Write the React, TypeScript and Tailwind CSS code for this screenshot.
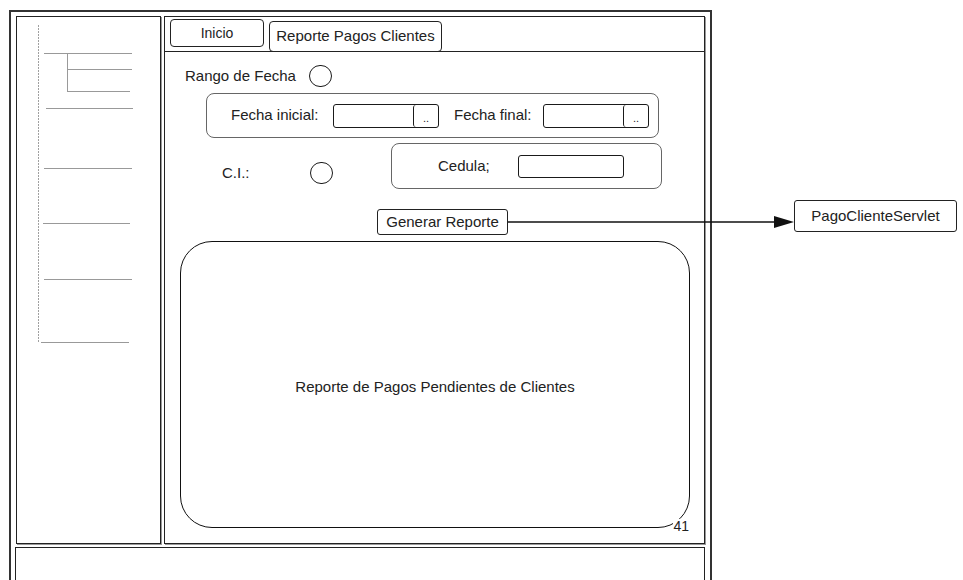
import React from 'react'

// wireframe of the "Reporte Pagos Clientes" screen

function TreeLines() {
  // coordinates are relative to the sidebar content box (page x/y minus 17)
  const rows: [number, number, number][] = [
    [36, 27, 115],
    [52, 50, 115],
    [74, 50, 113],
    [91, 29, 116],
    [151, 27, 115],
    [206, 26, 113],
    [262, 27, 115],
    [325, 24, 112],
  ]
  return (
    <svg width="143" height="340" className="block">
      <line x1="21.5" y1="8" x2="21.5" y2="325" stroke="#a0a0a0" strokeWidth="1" strokeDasharray="2 1" />
      <line x1="50.5" y1="36" x2="50.5" y2="74" stroke="#9a9a9a" strokeWidth="1" />
      {rows.map(([y, x1, x2], i) => (
        <line key={i} x1={x1} y1={y + 0.5} x2={x2} y2={y + 0.5} stroke="#999" strokeWidth="1" />
      ))}
    </svg>
  )
}

function DateInput() {
  return (
    <div className="flex h-[24px] w-[106px] shrink-0 rounded-[3px] border border-[#1a1a1a] bg-white">
      <div className="flex-1" />
      <div className="flex w-[25px] items-end justify-center rounded-[3px] border-l border-[#1a1a1a] pb-[3px] text-[11px] leading-none">
        ..
      </div>
    </div>
  )
}

function Circle({ className = '' }: { className?: string }) {
  return <div className={`h-[22px] w-[23px] shrink-0 rounded-full border border-[#1a1a1a] ${className}`} />
}

export default function App() {
  return (
    <div
      className="relative h-[580px] w-[963px] overflow-hidden bg-white text-[15px] text-[#222]"
      style={{ fontFamily: '"Liberation Sans", Arial, sans-serif' }}
    >
      <div className="ml-[9px] mt-[10px] h-[600px] w-[703px] border-2 border-[#333] px-[5px] pt-[4px]">
        <div className="flex h-[528px] gap-[3px]">
          {/* Sidebar with tree */}
          <aside className="w-[145px] shrink-0 border border-[#222] shadow-[1px_1px_0_0_#999]">
            <TreeLines />
          </aside>

          {/* Main panel */}
          <main className="flex w-[541px] shrink-0 flex-col border border-[#222] shadow-[1px_1px_0_0_#999]">
            <div className="flex h-[35px] items-start gap-[5px] border-b border-[#222] pl-[5px] pt-[2px]">
              <div className="flex h-[28px] w-[94px] items-center justify-center rounded-[4px] border border-[#222] text-[14px]">
                Inicio
              </div>
              <div className="mt-[2px] flex h-[31px] w-[173px] items-center justify-center rounded-[4px] border border-[#222]">
                Reporte Pagos Clientes
              </div>
            </div>

            <div className="mt-[13px] flex h-[22px] items-center pl-[20px]">
              <span className="w-[124px]">Rango de Fecha</span>
              <Circle />
            </div>

            <div className="ml-[41px] mt-[6px] flex h-[45px] w-[453px] items-center rounded-[8px] border border-[#666] pl-[24px]">
              <span className="w-[102px] shrink-0">Fecha inicial:</span>
              <DateInput />
              <span className="ml-[15px] w-[89px] shrink-0">Fecha final:</span>
              <DateInput />
            </div>

            <div className="mt-[5px] flex h-[46px] items-start">
              <div className="ml-[57px] mt-[19px] flex h-[22px] items-center">
                <span className="w-[88px]">C.I.:</span>
                <Circle />
              </div>
              <div className="ml-[58px] flex h-[46px] w-[271px] items-center rounded-[8px] border border-[#666] pl-[46px]">
                <span className="w-[80px] shrink-0">Cedula;</span>
                <div className="h-[23px] w-[106px] rounded-[3px] border border-[#1a1a1a]" />
              </div>
            </div>

            {/* Generar Reporte with connector to the servlet */}
            <div className="ml-[212px] mt-[20px] flex h-[26px] items-start">
              <div className="flex h-[26px] w-[131px] shrink-0 items-center justify-center rounded-[3px] border border-[#222]">
                Generar Reporte
              </div>
              <svg width="286" height="26" className="block shrink-0">
                <line x1="0" y1="13" x2="270" y2="13" stroke="#111" strokeWidth="1.5" />
                <polygon points="266,7 286,13 266,19" fill="#111" />
              </svg>
              <div className="-mt-[9px] flex h-[32px] w-[163px] shrink-0 items-center justify-center rounded-[3px] border border-[#222] bg-white">
                PagoClienteServlet
              </div>
            </div>

            <div className="relative ml-[15px] mt-[6px] flex h-[287px] w-[510px] items-center justify-center rounded-[32px] border-[1.5px] border-[#111] pt-[6px]">
              Reporte de Pagos Pendientes de Clientes
              <span className="absolute -bottom-[6px] right-0 bg-white text-[14px] leading-none">41</span>
            </div>
          </main>
        </div>

        <div className="-ml-px mt-[3px] h-[60px] w-[690px] border border-[#222]" />
      </div>
    </div>
  )
}
